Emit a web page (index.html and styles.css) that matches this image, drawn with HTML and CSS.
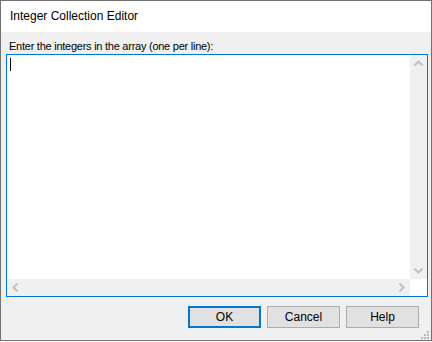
FILE: index.html
```html
<!DOCTYPE html>
<html>
<head>
<meta charset="utf-8">
<link rel="stylesheet" href="styles.css">
</head>
<body>
<div class="window">
  <div class="titlebar">Integer Collection Editor</div>
  <div class="client">
    <div class="label">Enter the integers in the array (one per line):</div>
    <div class="textbox">
      <div class="content"><span class="caret"></span></div>
      <div class="vscroll">
        <svg width="17" height="17" viewBox="0 0 17 17"><polyline points="4.5,10.5 8.5,6.5 12.5,10.5" fill="none" stroke="#c2c2c2" stroke-width="2"/></svg>
        <svg width="17" height="17" viewBox="0 0 17 17"><polyline points="4.5,6.5 8.5,10.5 12.5,6.5" fill="none" stroke="#c2c2c2" stroke-width="2"/></svg>
      </div>
      <div class="hscroll">
        <svg width="17" height="17" viewBox="0 0 17 17"><polyline points="10.5,4.5 6.5,8.5 10.5,12.5" fill="none" stroke="#c2c2c2" stroke-width="2"/></svg>
        <svg width="17" height="17" viewBox="0 0 17 17"><polyline points="6.5,4.5 10.5,8.5 6.5,12.5" fill="none" stroke="#c2c2c2" stroke-width="2"/></svg>
      </div>
      <div class="corner"></div>
    </div>
    <div class="buttons">
      <div class="btn default">OK</div>
      <div class="btn">Cancel</div>
      <div class="btn">Help</div>
    </div>
    <svg class="grip" width="8" height="8" viewBox="0 0 8 8">
      <rect x="6" y="0" width="2" height="2" fill="#b8b8b8"/>
      <rect x="3" y="3" width="2" height="2" fill="#b8b8b8"/>
      <rect x="6" y="3" width="2" height="2" fill="#b8b8b8"/>
      <rect x="0" y="6" width="2" height="2" fill="#b8b8b8"/>
      <rect x="3" y="6" width="2" height="2" fill="#b8b8b8"/>
      <rect x="6" y="6" width="2" height="2" fill="#b8b8b8"/>
    </svg>
  </div>
</div>
</body>
</html>
```
FILE: styles.css
```css
* { box-sizing: border-box; }
html, body { margin: 0; padding: 0; background: #ffffff; }
body {
  width: 432px;
  height: 342px;
  overflow: hidden;
  font-family: "Liberation Sans", Arial, sans-serif;
  color: #000;
}
.window {
  width: 432px;
  height: 341px;
  border: 1px solid #717171;
  display: flex;
  flex-direction: column;
  background: #f0f0f0;
}
.titlebar {
  height: 31px;
  flex: none;
  background: #ffffff;
  font-size: 12px;
  line-height: 31px;
  padding-left: 9px;
}
.client {
  flex: 1;
  position: relative;
  display: flex;
  flex-direction: column;
  background: #f0f0f0;
}
.label {
  height: 22px;
  flex: none;
  font-size: 11px;
  letter-spacing: -0.25px;
  line-height: 14px;
  padding: 7px 0 0 8px;
}
.textbox {
  flex: none;
  height: 243px;
  margin: 0 3px 0 5px;
  border: 1px solid #0078d7;
  background: #fff;
  display: grid;
  grid-template-columns: 1fr 17px;
  grid-template-rows: 1fr 17px;
}
.content {
  position: relative;
  background: #fff;
}
.caret {
  position: absolute;
  left: 3px;
  top: 3px;
  width: 1px;
  height: 13px;
  background: #000;
}
.vscroll {
  background: #f0f0f0;
  display: flex;
  flex-direction: column;
  justify-content: space-between;
}
.hscroll {
  background: #f0f0f0;
  display: flex;
  justify-content: space-between;
}
.vscroll svg, .hscroll svg { display: block; }
.corner { background: #fff; }
.buttons {
  flex: none;
  display: flex;
  justify-content: flex-end;
  gap: 6px;
  margin-top: 9px;
  padding-right: 12px;
}
.btn {
  width: 73px;
  height: 22px;
  background: #e1e1e1;
  border: 1px solid #adadad;
  font-size: 12px;
  line-height: 20px;
  text-align: center;
}
.btn.default {
  border: 2px solid #0078d7;
  line-height: 18px;
}
.grip {
  position: absolute;
  right: 2px;
  bottom: 1px;
}
```
